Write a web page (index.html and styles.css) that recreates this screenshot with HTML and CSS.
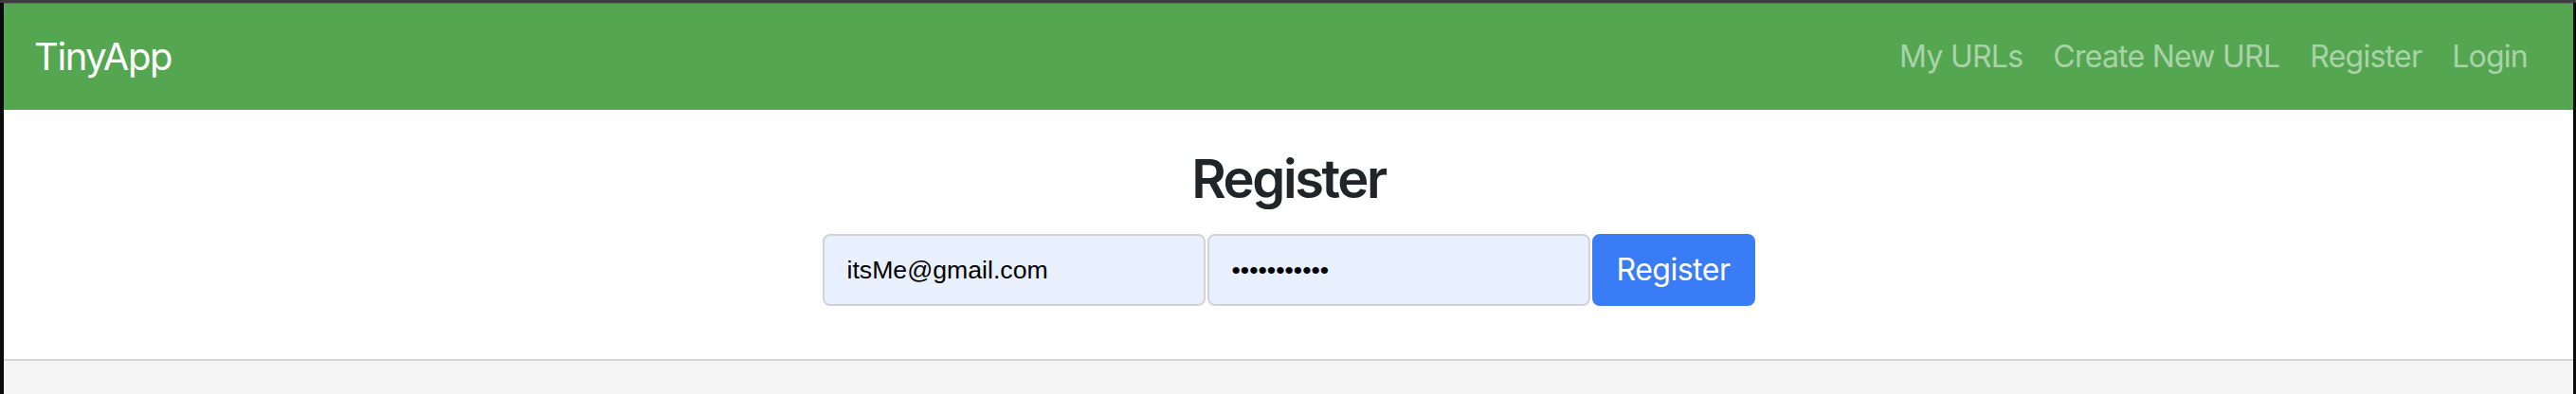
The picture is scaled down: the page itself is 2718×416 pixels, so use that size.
FILE: index.html
```html
<!DOCTYPE html>
<html lang="en">
<head>
<meta charset="utf-8">
<title>TinyApp - Register</title>
<link rel="stylesheet" href="styles.css">
</head>
<body>
<div class="frame">
  <div class="viewport">
    <nav class="navbar">
      <a class="brand" href="#">TinyApp</a>
      <ul class="nav-links">
        <li><a href="#">My URLs</a></li>
        <li><a href="#">Create New URL</a></li>
        <li><a href="#">Register</a></li>
        <li><a href="#">Login</a></li>
      </ul>
    </nav>
    <main class="main">
      <h3 class="title">Register</h3>
      <form class="register-form">
        <input class="field" type="email" name="email" value="itsMe@gmail.com">
        <input class="field" type="password" name="password" value="secretpass1">
        <button class="btn" type="submit">Register</button>
      </form>
    </main>
    <div class="footer-area"></div>
  </div>
</div>
</body>
</html>
```
FILE: styles.css
```css
* { box-sizing: border-box; }
html, body {
  margin: 0;
  padding: 0;
  height: 100%;
  background: #0d0d0d;
}
.frame {
  height: 416px;
  padding: 3px 3px 0 4px;
  background: #0b0b0b;
  position: relative;
}
.frame::before {
  content: "";
  position: absolute;
  left: 0; right: 0; top: 0;
  height: 3px;
  background: #3c3c40;
}
.viewport {
  height: 100%;
  display: flex;
  flex-direction: column;
  background: #ffffff;
  font-family: Inter, "Noto Sans", "Liberation Sans", sans-serif;
  border-top: 1px solid #6e6e72;
}
.navbar {
  height: 112px;
  flex: 0 0 112px;
  background: #54a651;
  display: flex;
  align-items: center;
  padding: 0 32px;
}
.brand {
  color: #ffffff;
  font-size: 40px;
  line-height: 60px;
  letter-spacing: -1.4px;
  text-decoration: none;
  font-weight: 400;
}
.nav-links {
  list-style: none;
  margin: 0 0 0 auto;
  padding: 0;
  display: flex;
}
.nav-links a {
  display: block;
  padding: 0 16px;
  font-size: 32px;
  line-height: 48px;
  letter-spacing: -0.75px;
  color: rgba(255, 255, 255, 0.52);
  text-decoration: none;
}
.nav-links li:last-child a {
  padding-right: 16px;
}
.main {
  height: 263px;
  flex: 0 0 263px;
  display: flex;
  flex-direction: column;
  align-items: center;
  padding-top: 40px;
}
.title {
  margin: 0 0 24px;
  font-size: 56px;
  line-height: 1.2;
  font-weight: 600;
  letter-spacing: -2.4px;
  color: #212529;
}
.register-form {
  display: flex;
  gap: 2px;
}
.field {
  width: 404px;
  height: 76px;
  margin: 0;
  padding: 0 24px;
  border: 2px solid #d0d2d6;
  border-radius: 8px;
  background: #e8f0fe;
  font-family: "Liberation Sans", Arial, sans-serif;
  font-size: 26.67px;
  color: #000000;
  outline: none;
}
.btn {
  width: 172px;
  height: 76px;
  margin: 0;
  padding: 0 20px;
  border: 2px solid #3a7cf5;
  border-radius: 8px;
  background: #3a7cf5;
  color: #ffffff;
  font-family: Inter, "Noto Sans", "Liberation Sans", sans-serif;
  font-size: 32px;
  line-height: 1.5;
  letter-spacing: -0.5px;
}
.footer-area {
  flex: 1 1 auto;
  background: #f5f5f5;
  border-top: 2px solid #d4d4d4;
}
```
